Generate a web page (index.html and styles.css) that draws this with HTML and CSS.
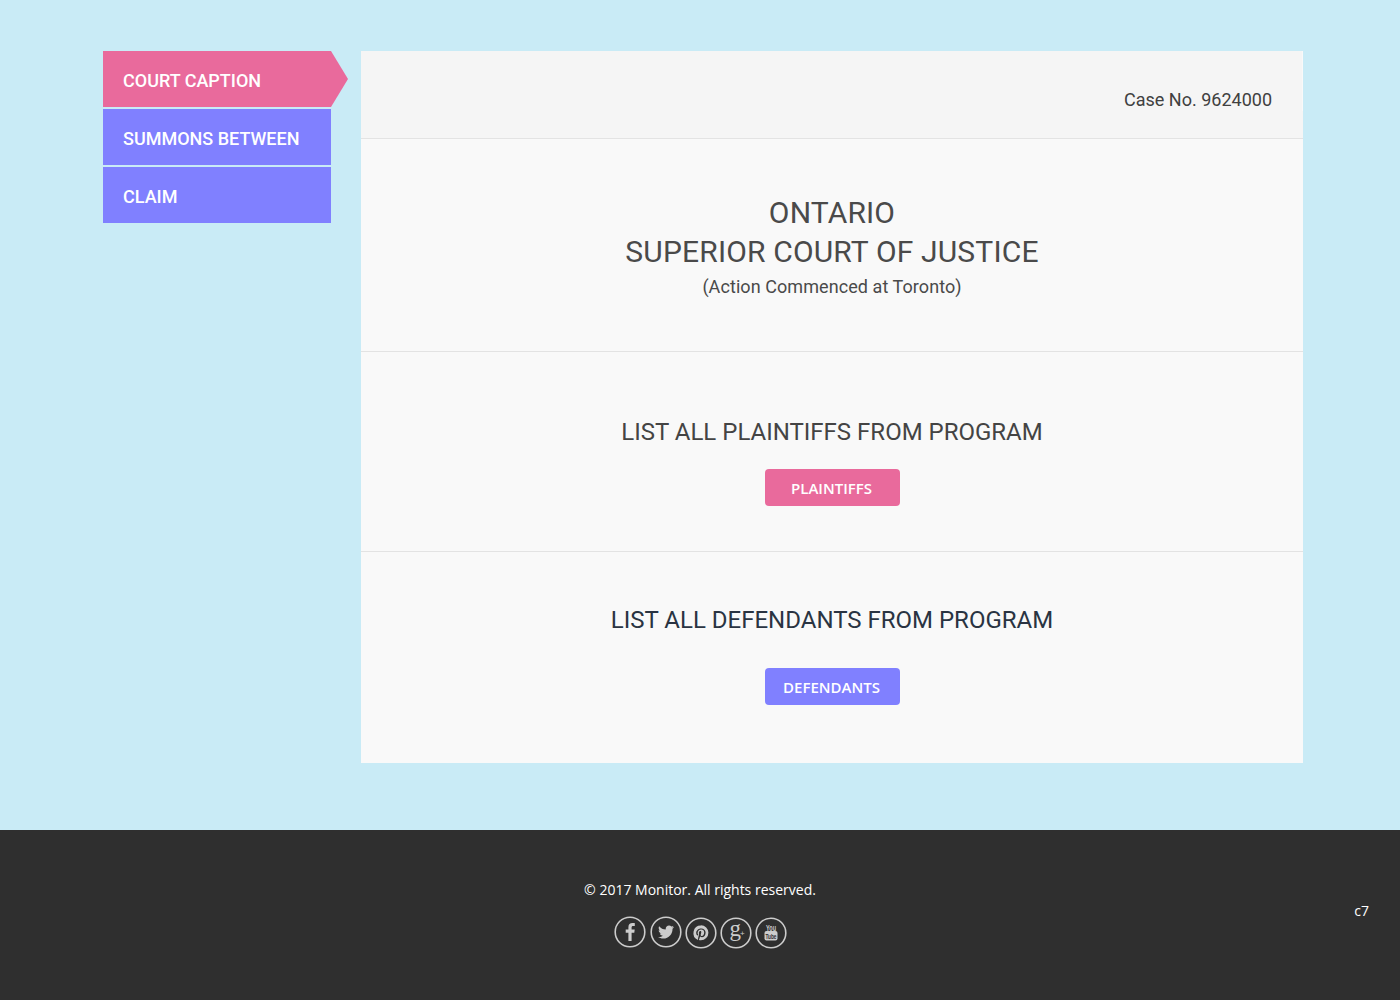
FILE: index.html
```html
<!DOCTYPE html>
<html lang="en">
<head>
    <meta charset="UTF-8">
    <title>Court Caption</title>
    <link rel="stylesheet" href="styles.css">
</head>
<body>

<div class="wrap">
    <ul class="steps">
        <li class="step active">COURT CAPTION</li>
        <li class="step">SUMMONS BETWEEN</li>
        <li class="step">CLAIM</li>
    </ul>

    <div class="panel">
        <div class="case-top">Case No. 9624000</div>
        <div class="case-bottom"></div>

        <div class="section court">
            <h1>ONTARIO<br>SUPERIOR COURT OF JUSTICE</h1>
            <p>(Action Commenced at Toronto)</p>
        </div>

        <div class="section plaintiffs">
            <h2>LIST ALL PLAINTIFFS FROM PROGRAM</h2>
            <a class="btn btn-pink" href="#">PLAINTIFFS</a>
        </div>

        <div class="section defendants">
            <h2>LIST ALL DEFENDANTS FROM PROGRAM</h2>
            <a class="btn btn-blue" href="#">DEFENDANTS</a>
        </div>
    </div>
</div>

<div class="footer">
    <p class="copy">© 2017 Monitor. All rights reserved.</p>
    <div class="social">
        <svg class="icon fb" viewBox="0 0 32 32">
            <circle cx="16" cy="16" r="14.8"/>
            <path class="glyph" d="M17.600 25v-8.200h2.700l.4-3.200h-3.100v-2c0-.9.300-1.500 1.600-1.500h1.600V7.200c-.3 0-1.300-.1-2.400-.1-2.400 0-4 1.400-4 4.100v2.400h-2.700v3.200h2.700V25z"/>
        </svg>
        <svg class="icon" viewBox="0 0 32 32">
            <circle cx="16" cy="16" r="14.8"/>
            <path class="glyph" d="M24 11.100c-.6.300-1.200.4-1.900.5.700-.4 1.200-1 1.400-1.800-.6.400-1.300.6-2.100.8-.6-.6-1.400-1-2.400-1-1.800 0-3.300 1.500-3.300 3.300 0 .3 0 .5.100.7-2.700-.1-5.100-1.400-6.700-3.400-.3.500-.4 1-.4 1.700 0 1.100.6 2.100 1.500 2.700-.5 0-1-.2-1.500-.4 0 1.600 1.100 2.900 2.600 3.200-.3.100-.6.100-.9.100-.2 0-.4 0-.6-.1.400 1.300 1.600 2.200 3.100 2.300-1.100.9-2.500 1.400-4.100 1.400H8c1.500.9 3.200 1.500 5.100 1.500 6.100 0 9.400-5 9.400-9.400v-.4c.6-.5 1.100-1.100 1.500-1.700z"/>
        </svg>
        <svg class="icon low" viewBox="0 0 32 32">
            <circle cx="16" cy="16" r="14.8"/>
            <path class="glyph" d="M16 8.500a7.500 7.500 0 0 0-3 14.400c0-.5 0-1.200.1-1.700l1-4.100s-.2-.5-.2-1.200c0-1.100.6-1.900 1.400-1.900.7 0 1 .5 1 1.100 0 .7-.4 1.700-.6 2.600-.2.800.4 1.400 1.100 1.400 1.400 0 2.400-1.800 2.400-3.900 0-1.600-1.100-2.800-3-2.800-2.200 0-3.600 1.600-3.600 3.500 0 .6.200 1.100.5 1.400.1.200.1.200.1.400l-.2.600c0 .2-.2.300-.4.200-1-.4-1.400-1.500-1.400-2.700 0-2 1.700-4.400 5-4.400 2.700 0 4.400 1.900 4.400 4 0 2.700-1.500 4.800-3.800 4.800-.8 0-1.500-.4-1.700-.9l-.5 1.800c-.1.600-.5 1.300-.8 1.800.7.200 1.400.3 2.100.3a7.500 7.500 0 0 0 0-15z"/>
        </svg>
        <svg class="icon low" viewBox="0 0 32 32">
            <circle cx="16" cy="16" r="14.8"/>
            <text class="gplus" x="9.500" y="19">g</text>
            <text class="gplus-mark" x="20" y="18.500">+</text>
        </svg>
        <svg class="icon low" viewBox="0 0 32 32">
            <circle cx="16" cy="16" r="14.8"/>
            <text class="yt-you" x="11" y="13.500" textLength="10" lengthAdjust="spacingAndGlyphs">You</text>
            <rect class="glyph" x="9.500" y="14" width="13" height="9.500" rx="2"/>
            <text class="yt-tube" x="10.500" y="22" textLength="11" lengthAdjust="spacingAndGlyphs">Tube</text>
        </svg>
    </div>
    <div class="tag">c7</div>
</div>

</body>
</html>
```

FILE: styles.css
```css
* {
    padding: 0;
    margin: 0;
    box-sizing: border-box;
}
body {
    background: #c9ebf6;
    font-family: Roboto, "Liberation Sans", sans-serif;
    color: #404040;
}
.wrap {
    width: 1200px;
    margin-left: 103px;
    padding: 51px 0 67px;
    display: flex;
    gap: 30px;
}

/* left steps */
.steps {
    width: 228px;
    list-style: none;
    display: flex;
    flex-direction: column;
    gap: 2px;
}
.step {
    height: 56px;
    padding-left: 20px;
    line-height: 59px;
    font-size: 18px;
    font-weight: 500;
    color: #fff;
    background: #8080ff;
}
.step.active {
    width: 245px;
    background: #e96a9c;
    clip-path: polygon(0 0, 228px 0, 100% 50%, 228px 100%, 0 100%);
}

/* main panel */
.panel {
    width: 942px;
    background: #f9f9f9;
}
.case-top {
    height: 60px;
    margin-right: 1px;
    padding: 37px 30px 0 0;
    line-height: 24px;
    text-align: right;
    font-size: 18px;
    background: #f5f5f5;
}
.case-bottom {
    height: 28px;
    background: #f5f5f5;
    border-bottom: 1px solid #e3e3e3;
}
.section {
    text-align: center;
    border-bottom: 1px solid #e3e3e3;
}
.section:last-child {
    border-bottom: 0;
}
.court {
    height: 213px;
    padding-top: 54px;
}
.court h1 {
    font-size: 30px;
    font-weight: 400;
    line-height: 39px;
    letter-spacing: .16px;
    color: #4a4a4a;
}
.court p {
    margin-top: 4px;
    font-size: 18px;
    line-height: 24px;
    letter-spacing: .07px;
    color: #4a4a4a;
}
.plaintiffs {
    height: 200px;
    padding-top: 64px;
}
.defendants {
    height: 211px;
    padding-top: 52px;
}
.section h2 {
    font-size: 24px;
    font-weight: 400;
    line-height: 32px;
}
.plaintiffs h2 {
    color: #444;
}
.defendants h2 {
    color: #2a3442;
}
.btn {
    display: block;
    width: 135px;
    height: 37px;
    margin: 21px auto 0;
    padding-right: 1px;
    line-height: 39px;
    border-radius: 4px;
    font-family: "Open Sans", sans-serif;
    font-size: 15px;
    font-weight: 600;
    color: #fff;
    text-decoration: none;
}
.defendants .btn {
    margin-top: 32px;
}
.btn-pink {
    background: #e96a9c;
}
.btn-blue {
    background: #8080ff;
}

/* footer */
.footer {
    height: 170px;
    padding-top: 50px;
    position: relative;
    text-align: center;
    background: #2f2f2f;
    color: #fff;
    font-family: "Open Sans", sans-serif;
}
.copy {
    font-size: 14px;
    line-height: 20px;
}
.social {
    margin-top: 16px;
    display: flex;
    justify-content: center;
    gap: 3px;
}
.icon {
    width: 32px;
    height: 32px;
}
.icon.fb {
    margin-right: 1px;
}
.icon.low {
    margin-top: 1px;
}
.icon circle {
    fill: none;
    stroke: #ccc;
    stroke-width: 1.6;
}
.glyph {
    fill: #ccc;
}
.gplus {
    font-family: "Liberation Serif", serif;
    font-size: 23px;
    fill: #ccc;
}
.gplus-mark {
    font-family: "Liberation Sans", sans-serif;
    font-size: 8px;
    fill: #ccc;
}
.yt-you {
    font-family: "Liberation Sans", sans-serif;
    font-size: 9px;
    font-weight: 700;
    fill: #ccc;
}
.yt-tube {
    font-family: "Liberation Sans", sans-serif;
    font-size: 8px;
    font-weight: 700;
    fill: #2f2f2f;
}
.tag {
    position: absolute;
    top: 71px;
    right: 31px;
    font-size: 14px;
    line-height: 20px;
}
```
